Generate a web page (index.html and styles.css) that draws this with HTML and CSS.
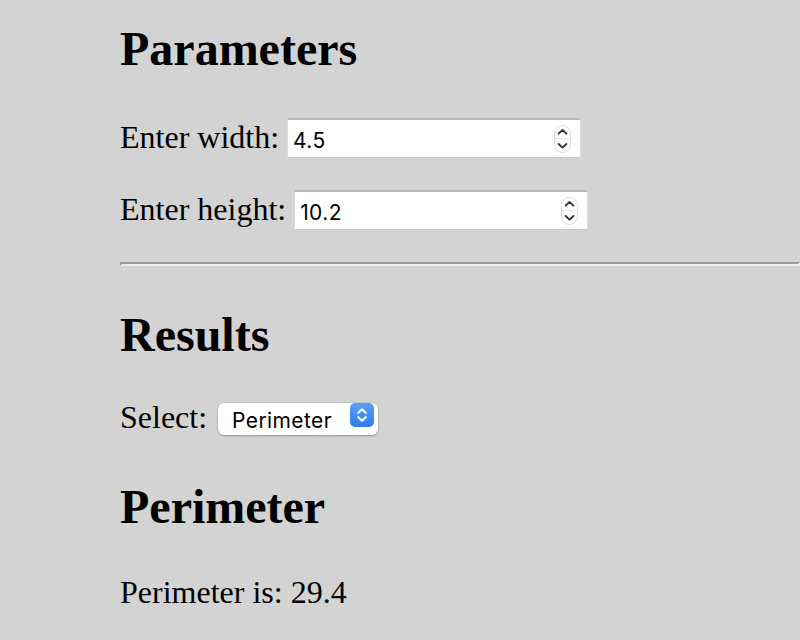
FILE: index.html
```html
<!DOCTYPE html>
<html lang="en">
<head>
<meta charset="utf-8">
<title>Parameters</title>
<link rel="stylesheet" href="styles.css">
</head>
<body>
  <h1 class="title title-first">Parameters</h1>
  <div class="row row-first">
    <label class="label" for="w">Enter width:</label>
    <span class="num">
      <input class="num-input" id="w" type="number" value="4.5" step="0.1">
      <svg class="spin" width="17" height="28" viewBox="0 0 17 28" aria-hidden="true">
        <rect x="0.5" y="0.5" width="16" height="27" rx="8" fill="#fff" stroke="#dcdcdc"/>
        <line x1="1" y1="14" x2="16" y2="14" stroke="#e2e2e2"/>
        <path d="M4.6 8.6 L8.5 5 L12.4 8.6" fill="none" stroke="#333" stroke-width="1.9" stroke-linecap="round" stroke-linejoin="round"/>
        <path d="M4.6 19 L8.5 22.6 L12.4 19" fill="none" stroke="#333" stroke-width="1.9" stroke-linecap="round" stroke-linejoin="round"/>
      </svg>
    </span>
  </div>
  <div class="row row-second">
    <label class="label" for="h">Enter height:</label>
    <span class="num">
      <input class="num-input" id="h" type="number" value="10.2" step="0.1">
      <svg class="spin" width="17" height="28" viewBox="0 0 17 28" aria-hidden="true">
        <rect x="0.5" y="0.5" width="16" height="27" rx="8" fill="#fff" stroke="#dcdcdc"/>
        <line x1="1" y1="14" x2="16" y2="14" stroke="#e2e2e2"/>
        <path d="M4.6 8.6 L8.5 5 L12.4 8.6" fill="none" stroke="#333" stroke-width="1.9" stroke-linecap="round" stroke-linejoin="round"/>
        <path d="M4.6 19 L8.5 22.6 L12.4 19" fill="none" stroke="#333" stroke-width="1.9" stroke-linecap="round" stroke-linejoin="round"/>
      </svg>
    </span>
  </div>
  <hr class="rule">
  <h1 class="title title-results">Results</h1>
  <div class="row row-select">
    <label class="label" for="s">Select:</label>
    <span class="sel">
      <select class="sel-input" id="s">
        <option>Perimeter</option>
        <option>Area</option>
      </select>
      <svg class="sel-btn" width="24" height="24" viewBox="0 0 24 24" aria-hidden="true">
        <defs>
          <linearGradient id="bg" x1="0" y1="0" x2="0" y2="1">
            <stop offset="0" stop-color="#5b9ffb"/>
            <stop offset="1" stop-color="#2f7bf5"/>
          </linearGradient>
        </defs>
        <rect x="0" y="0" width="24" height="24" rx="5" fill="url(#bg)"/>
        <path d="M8.3 9.8 L12 6.3 L15.7 9.8" fill="none" stroke="#fff" stroke-width="2.2" stroke-linecap="round" stroke-linejoin="round"/>
        <path d="M8.3 14.2 L12 17.7 L15.7 14.2" fill="none" stroke="#fff" stroke-width="2.2" stroke-linecap="round" stroke-linejoin="round"/>
      </svg>
    </span>
  </div>
  <h1 class="title title-result">Perimeter</h1>
  <p class="result">Perimeter is: 29.4</p>
</body>
</html>
```

FILE: styles.css
```css
html {
  background: #d3d3d3;
}

body {
  margin: 0 0 0 120px;
  background: #d3d3d3;
  color: #000;
  font-family: "Liberation Serif", "Times New Roman", serif;
  font-size: 32px;
}

.title {
  font-size: 48px;
  line-height: 56px;
  font-weight: bold;
  margin: 0;
}

.title-first {
  margin-top: 21px;
}

.title-results {
  margin-top: 41px;
}

.title-result {
  margin-top: 43px;
}

.row {
  display: flex;
  align-items: baseline;
  gap: 8px;
}

.row-first {
  margin-top: 41px;
}

.row-second {
  margin-top: 32px;
}

.row-select {
  margin-top: 36px;
}

.label {
  line-height: 36px;
}

.num {
  position: relative;
  display: inline-block;
}

.num-input {
  box-sizing: border-box;
  width: 294px;
  height: 40px;
  margin: 0;
  padding: 4px 40px 0 5px;
  background: #fff;
  color: #000;
  font-family: Inter, "Liberation Sans", sans-serif;
  font-size: 21px;
  letter-spacing: 0.4px;
  border-style: solid;
  border-width: 2px 1px 1px 1px;
  border-color: #b9b9b9 #dcdcdc #c8c8c8 #dcdcdc;
  border-radius: 0;
  outline: none;
  -moz-appearance: textfield;
}

.num-input::-webkit-inner-spin-button,
.num-input::-webkit-outer-spin-button {
  -webkit-appearance: none;
  margin: 0;
}

.spin {
  position: absolute;
  right: 10px;
  top: 7px;
  pointer-events: none;
}

.rule {
  margin: 32px 0 0;
  height: 0;
  border-style: solid;
  border-width: 2px;
  border-color: #9a9a9a #eeeeee #eeeeee #9a9a9a;
}

.sel {
  position: relative;
  display: inline-block;
  margin-left: 3px;
}

.sel-input {
  -webkit-appearance: none;
  appearance: none;
  box-sizing: border-box;
  width: 160px;
  height: 32px;
  margin: 0;
  padding: 3px 30px 0 14px;
  border: none;
  border-radius: 6px;
  background: #fff;
  color: #000;
  font-family: Inter, "Liberation Sans", sans-serif;
  font-size: 21px;
  letter-spacing: 0.4px;
  box-shadow: 0 0 0 0.5px rgba(0, 0, 0, 0.12), 0 1px 2px rgba(0, 0, 0, 0.25);
  outline: none;
}

.sel-btn {
  position: absolute;
  right: 4px;
  top: 4px;
  pointer-events: none;
}

.result {
  margin: 39px 0 0;
  line-height: 36px;
}
```
